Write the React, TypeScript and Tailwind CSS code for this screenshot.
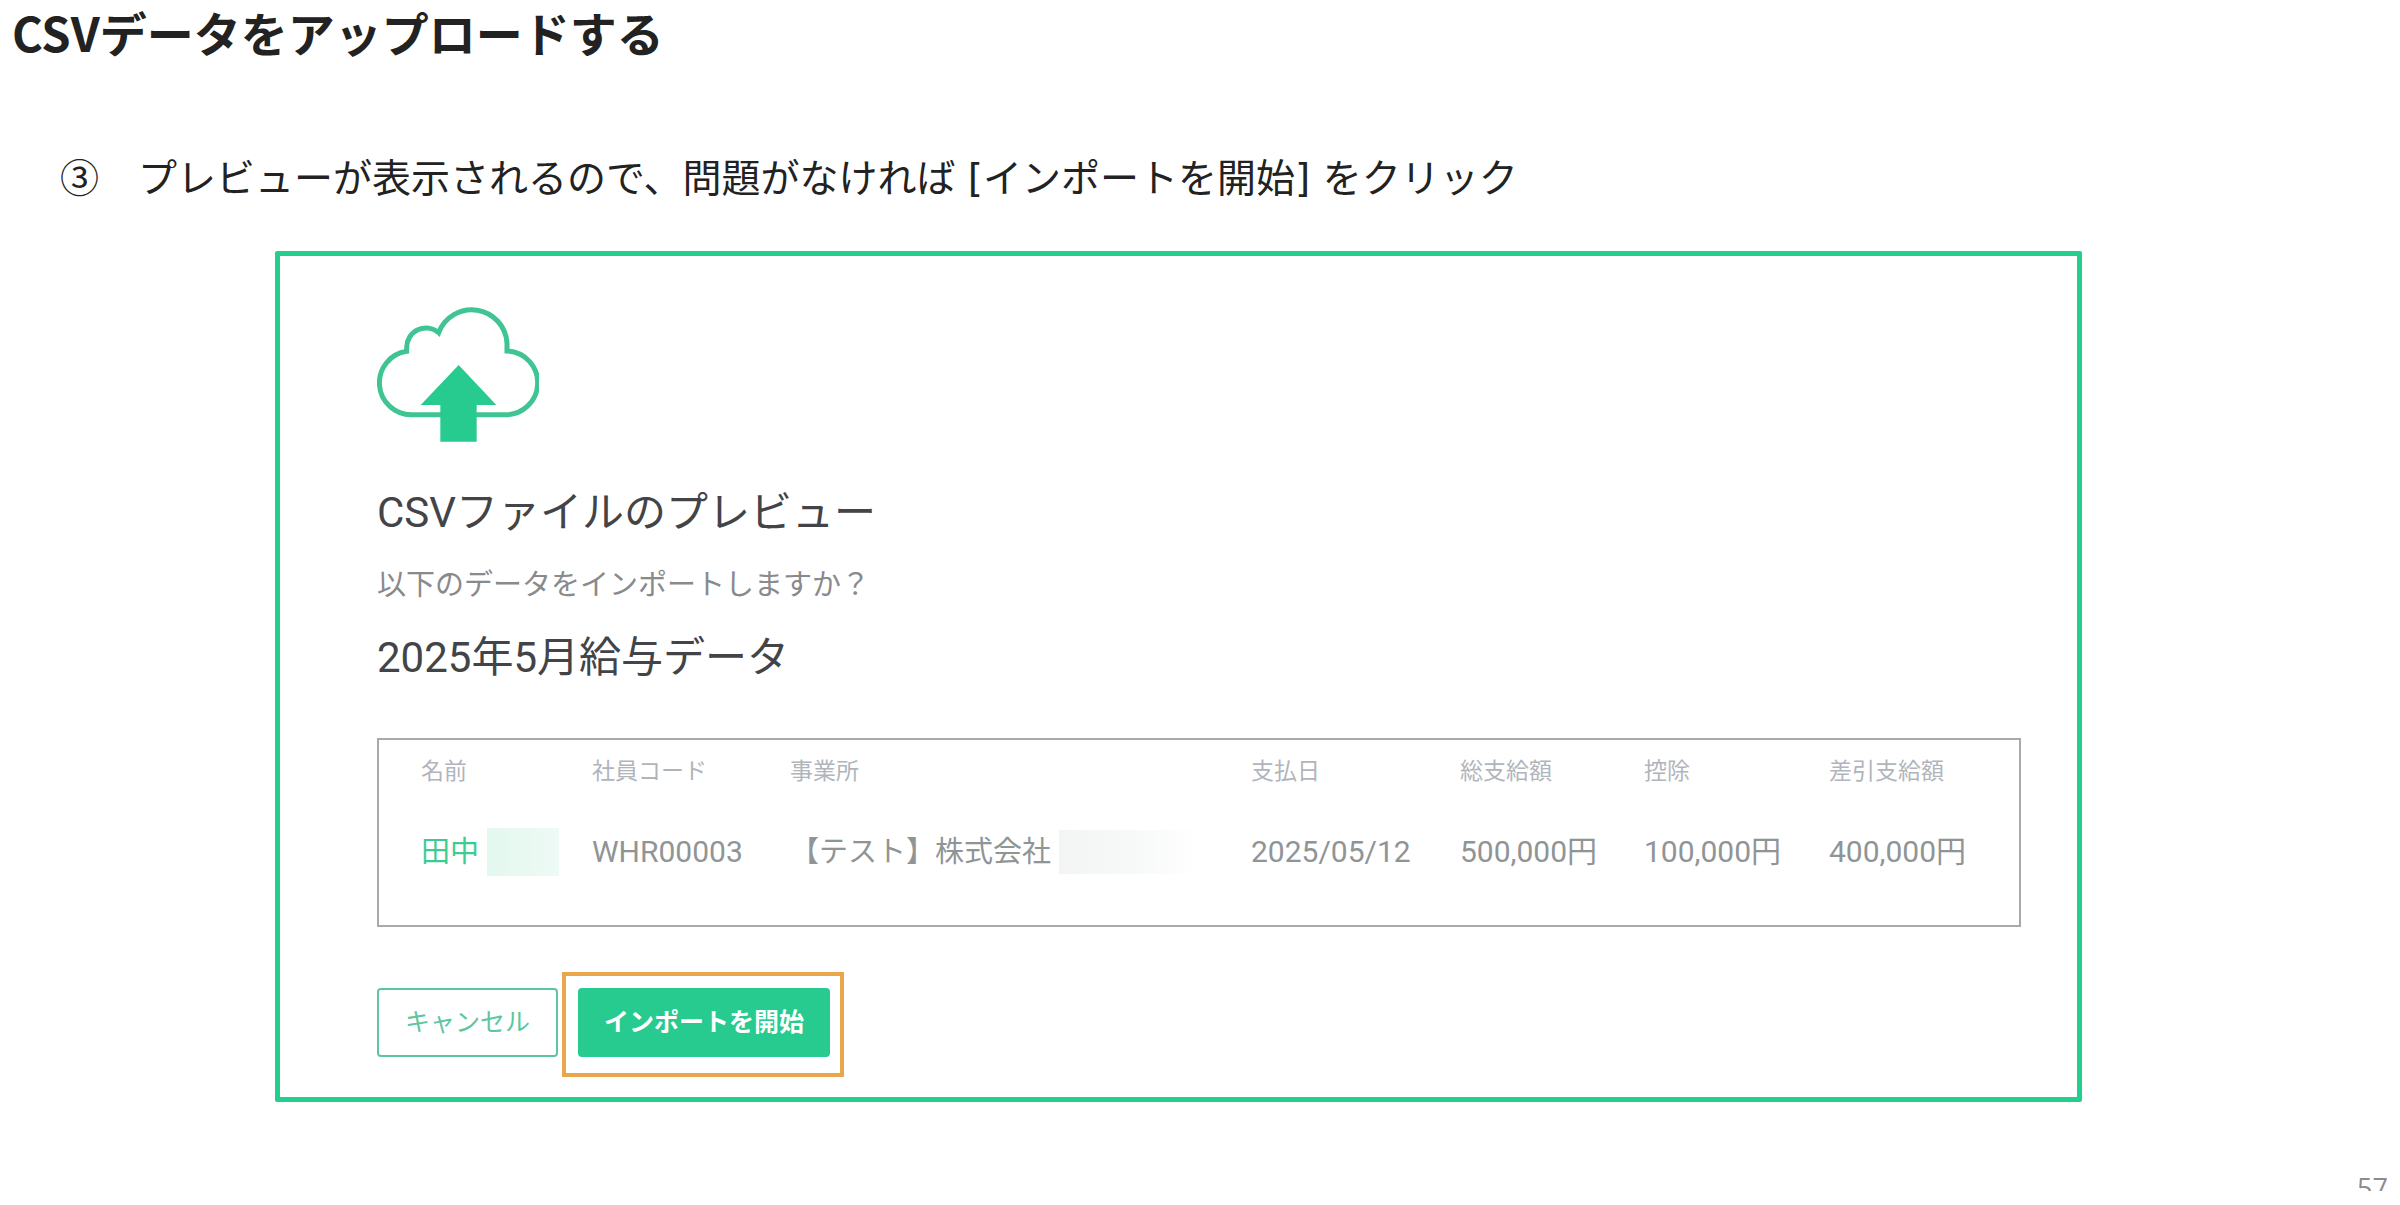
type Column = {
  label: string;
  width: string;
};

const COLUMNS: Column[] = [
  { label: "名前", width: "w-[171px]" },
  { label: "社員コード", width: "w-[198px]" },
  { label: "事業所", width: "" },
  { label: "支払日", width: "w-[209px]" },
  { label: "総支給額", width: "w-[184px]" },
  { label: "控除", width: "w-[185px]" },
  { label: "差引支給額", width: "w-[190px]" },
];

const ROWS = [
  {
    name: "田中",
    code: "WHR00003",
    office: "【テスト】株式会社",
    date: "2025/05/12",
    gross: "500,000円",
    deduction: "100,000円",
    net: "400,000円",
  },
];

function CloudUpload() {
  return (
    <svg
      viewBox="350 200 486 405"
      className="h-[135px] w-[162px] text-[#28cb8f]"
      fill="none"
      aria-hidden
    >
      <path
        d="M454 523A95.500 95.500 0 0 1 439 333V322A58 58 0 0 1 535 277A106 106 0 0 1 740 308V332A95.500 95.500 0 0 1 733 523Z"
        stroke="#3fc493"
        strokeWidth="15"
      />
      <path d="M595 374L708 494H649V604H540V494H481Z" fill="currentColor" />
    </svg>
  );
}

function PreviewTable() {
  return (
    <div className="mt-[52px] border-2 border-[#a9a9a9] pt-3 pb-[41px] pl-[42px]">
      <table className="w-full table-fixed text-left whitespace-nowrap">
        <thead>
          <tr>
            {COLUMNS.map(({ label, width }) => (
              <th
                key={label}
                scope="col"
                className={`${width} h-10 p-0 text-[23px] leading-10 font-normal text-[#b0b5bc]`}
              >
                {label}
              </th>
            ))}
          </tr>
        </thead>
        <tbody className="text-[30px] leading-10 text-[#8f9596]">
          {ROWS.map((row) => (
            <tr key={row.code} className="h-[92px]">
              <td className="p-0 pt-7">
                <div className="flex items-center gap-2 text-[29px] text-[#3ecb93]">
                  {row.name}
                  {/* masked given name */}
                  <span className="h-12 w-[72px] bg-linear-to-r from-[#e3f8ef] to-[#eefaf5]" />
                </div>
              </td>
              <td className="p-0 pt-7">{row.code}</td>
              <td className="p-0 pt-7">
                <div className="flex items-center gap-2 text-[29px]">
                  {row.office}
                  {/* masked company name */}
                  <span className="h-11 w-[140px] bg-linear-to-r from-[#f3f4f4] via-[#f7f8f8] to-white" />
                </div>
              </td>
              <td className="p-0 pt-7">{row.date}</td>
              <td className="p-0 pt-7">{row.gross}</td>
              <td className="p-0 pt-7">{row.deduction}</td>
              <td className="p-0 pt-7">{row.net}</td>
            </tr>
          ))}
        </tbody>
      </table>
    </div>
  );
}

export default function App() {
  return (
    <main className="flex min-h-screen flex-col bg-white font-['Noto_Sans_CJK_JP',sans-serif] text-[#222222]">
      <h1 className="pt-1 pl-3 text-[47px] leading-14 font-bold">
        CSVデータをアップロードする
      </h1>
      <p className="mt-[87px] pl-[60px] text-[39px] leading-14">
        ③　プレビューが表示されるので、問題がなければ
        <span className="font-['DejaVu_Sans',sans-serif] leading-none"> [</span>
        インポートを開始
        <span className="font-['DejaVu_Sans',sans-serif] leading-none">] </span>
        をクリック
      </p>

      <section className="mt-12 mr-[318px] ml-[275px] rounded-xs border-[5px] border-[#22cf8c] pt-[51px] pr-14 pb-5 pl-[97px] font-['Roboto','Noto_Sans_CJK_JP',sans-serif]">
        <CloudUpload />
        <h2 className="mt-[43px] text-[42px] leading-14 text-[#424448]">
          CSVファイルのプレビュー
        </h2>
        <p className="mt-6 text-[29px] leading-10 text-[#888a8c]">
          以下のデータをインポートしますか？
        </p>
        <h3 className="mt-[25px] text-[42px] leading-14 text-[#424448]">
          2025年5月給与データ
        </h3>

        <PreviewTable />

        <div className="mt-[45px] flex items-start gap-1">
          <button
            type="button"
            className="mt-4 h-[69px] rounded-sm border-2 border-[#5cc6a0] px-[26px] text-[25px] text-[#5cc6a0]"
          >
            キャンセル
          </button>
          <div className="border-4 border-[#eaa64a] pt-3 pr-[10px] pb-4 pl-3">
            <button
              type="button"
              className="h-[69px] rounded-sm bg-[#28cb8f] px-[26px] text-[25px] font-bold text-white"
            >
              インポートを開始
            </button>
          </div>
        </div>
      </section>

      <footer className="mt-[66px] h-[23px] overflow-hidden pr-3 text-right font-['Open_Sans',sans-serif] text-[27px] leading-10 text-[#8c8c8c]">
        57
      </footer>
    </main>
  );
}
